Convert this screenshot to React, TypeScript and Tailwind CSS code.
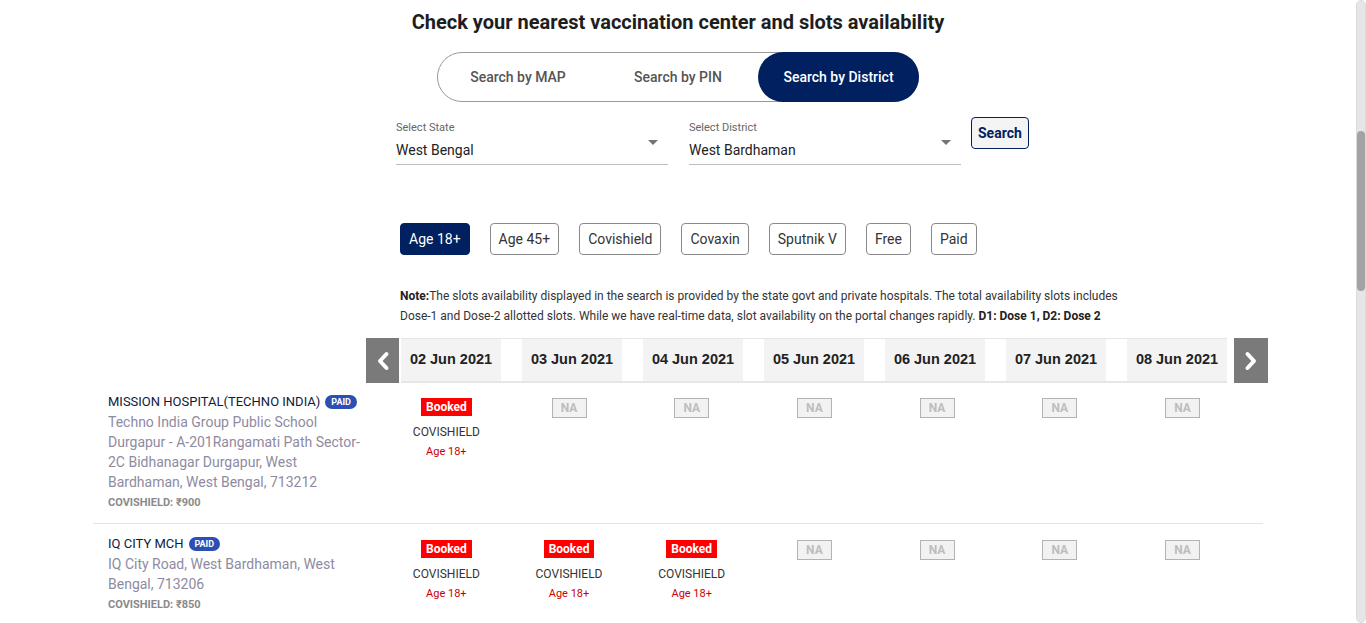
import React from 'react';

const NAVY = 'bg-[#002060]';

const dates = ['02 Jun 2021', '03 Jun 2021', '04 Jun 2021', '05 Jun 2021', '06 Jun 2021', '07 Jun 2021', '08 Jun 2021'];
const filters = ['Age 18+', 'Age 45+', 'Covishield', 'Covaxin', 'Sputnik V', 'Free', 'Paid'];

interface Center {
  name: string;
  address: string;
  price: string;
  slots: boolean[]; // true = booked, false = NA
}

const centers: Center[] = [
  {
    name: 'MISSION HOSPITAL(TECHNO INDIA)',
    address: 'Techno India Group Public School Durgapur - A-201Rangamati Path Sector-2C Bidhanagar Durgapur, West Bardhaman, West Bengal, 713212',
    price: 'COVISHIELD: ₹900',
    slots: [true, false, false, false, false, false, false],
  },
  {
    name: 'IQ CITY MCH',
    address: 'IQ City Road, West Bardhaman, West Bengal, 713206',
    price: 'COVISHIELD: ₹850',
    slots: [true, true, true, false, false, false, false],
  },
];

function Chevron({ dir }: { dir: 'left' | 'right' }) {
  return (
    <svg width="14" height="20" viewBox="0 0 14 20" fill="none">
      <path
        d={dir === 'left' ? 'M10.5 3 L4 10 L10.5 17' : 'M3.5 3 L10 10 L3.5 17'}
        stroke="white"
        strokeWidth="4"
        strokeLinecap="round"
        strokeLinejoin="round"
      />
    </svg>
  );
}

function SelectBox({ label, value }: { label: string; value: string }) {
  return (
    <div className="w-[272px] border-b border-[#bdbdbd] relative">
      <div className="text-[11px] leading-[14px] text-[#666] pt-[4px]">{label}</div>
      <div className="mt-[1px] text-[14px] leading-[28px] text-[#222]">{value}</div>
      <svg className="absolute right-[10px] top-[23px]" width="10" height="5" viewBox="0 0 10 5">
        <path d="M0 0 L10 0 L5 5 Z" fill="#757575" />
      </svg>
    </div>
  );
}

export default function App() {
  return (
    <div className="relative h-[623px] overflow-hidden bg-white font-['Roboto',sans-serif]">
      <div className="w-[1356px]">
        <h1 className="text-center text-[20px] font-bold text-[#1e1e1e] pt-[10px] leading-[24px]">
          Check your nearest vaccination center and slots availability
        </h1>

        <div className="flex justify-center mt-[18px]">
          <div className="flex w-[482px] h-[50px] rounded-full border border-[#9a9a9a]">
            <div className="w-[160px] flex items-center justify-center text-[14px] font-medium text-[#555]">Search by MAP</div>
            <div className="w-[160px] flex items-center justify-center text-[14px] font-medium text-[#555]">Search by PIN</div>
            <div className={`w-[161px] -my-px -mr-px flex items-center justify-center rounded-full ${NAVY} text-[14px] font-medium text-white`}>
              Search by District
            </div>
          </div>
        </div>

        <div className="w-[1170px] mx-auto">
          <div className="flex items-start gap-[21px] pl-[303px] mt-[15px]">
            <SelectBox label="Select State" value="West Bengal" />
            <SelectBox label="Select District" value="West Bardhaman" />
            <button className="-ml-[11px] h-[32px] px-[6px] rounded-[4px] border border-[#002060] bg-[#f4f4f4] text-[14px] font-bold text-[#002060]">
              Search
            </button>
          </div>

          <div className="flex gap-[20px] pl-[307px] mt-[58px]">
            {filters.map((f, i) => (
              <div
                key={f}
                className={`h-[32px] px-[8px] flex items-center rounded-[4px] border text-[14px] ${
                  i === 0 ? 'bg-[#002060] border-[#002060] text-white' : 'border-[#8a8a8a] text-[#333]'
                }`}
              >
                {f}
              </div>
            ))}
          </div>

          <div className="pl-[307px] mt-[31px] text-[12px] leading-[20px] text-[#333]">
            <div>
              <b className="text-[#222]">Note:</b>The slots availability displayed in the search is provided by the state govt and private hospitals. The total availability slots includes
            </div>
            <div>
              Dose-1 and Dose-2 allotted slots. While we have real-time data, slot availability on the portal changes rapidly. <b className="text-[#222]">D1: Dose 1, D2: Dose 2</b>
            </div>
          </div>

          <div className="flex mt-[12px] pl-[273px] w-[1175px]">
            <div className="w-[33px] h-[45px] bg-[#7a7a7a] flex items-center justify-center">
              <Chevron dir="left" />
            </div>
            <div className="ml-[2px] flex gap-[21px] border-t border-b-2 border-[#e6e6e6] h-[45px]">
              {dates.map((d) => (
                <div
                  key={d}
                  className="w-[100px] bg-[#f3f3f3] flex items-center justify-center font-['Liberation_Sans',Arial,sans-serif] text-[14.5px] font-bold text-[#222]"
                >
                  {d}
                </div>
              ))}
            </div>
            <div className="ml-[7px] w-[34px] h-[45px] bg-[#7a7a7a] flex items-center justify-center">
              <Chevron dir="right" />
            </div>
          </div>

          <div>
            {centers.map((c, idx) => (
              <div key={c.name} className={`flex ${idx === 0 ? 'pt-[9px] pb-[9px] border-b border-[#e4e4e4]' : 'pt-[10px] pb-[10px]'}`}>
                <div className="w-[292px] pl-[15px] pr-[12px]">
                  <div className="flex items-center gap-[5px] text-[13px] leading-[20px] text-[#0d1b3e]">
                    {c.name}
                    <span className="rounded-full bg-[#2b4fb3] px-[6px] text-[9px] leading-[14px] font-bold text-white">PAID</span>
                  </div>
                  <div className="text-[14px] leading-[20px] text-[#8e8ba1]">{c.address}</div>
                  <div className="text-[11px] leading-[22px] font-bold text-[#8a8a8a]">{c.price}</div>
                </div>
                <div className="flex">
                  {c.slots.map((booked, i) => (
                    <div key={i} className="w-[122.7px] flex flex-col items-center pt-[6px]">
                      {booked ? (
                        <>
                          <div className="h-[18px] px-[5px] bg-[#ff0000] text-white text-[12px] font-bold leading-[18px]">Booked</div>
                          <div className="mt-[6px] text-[12px] leading-[20px] text-[#333]">COVISHIELD</div>
                          <div className="text-[11px] leading-[20px] text-[#c00]">Age 18+</div>
                        </>
                      ) : (
                        <div className="h-[20px] w-[35px] border border-[#b3b3b3] bg-[#f2f2f2] flex items-center justify-center text-[12px] font-bold text-[#bdbdbd]">
                          NA
                        </div>
                      )}
                    </div>
                  ))}
                </div>
              </div>
            ))}
          </div>
        </div>
      </div>

      <div className="absolute right-0 top-0 w-[10px] h-[623px] rounded-full bg-[#e6e6e6] border border-[#dcdcdc]">
        <div className="absolute left-0 right-0 top-[130px] h-[160px] rounded-full bg-[#a3a3a3]" />
      </div>
    </div>
  );
}
